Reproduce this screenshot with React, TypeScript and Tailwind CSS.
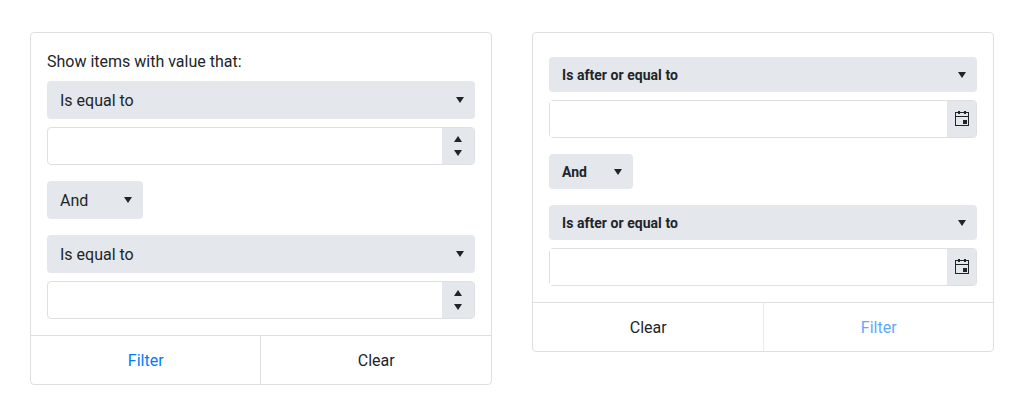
import React from 'react';

function Caret({ up = false }: { up?: boolean }) {
  return (
    <svg className="block h-[6px] w-2 shrink-0" viewBox="0 0 8 6" fill="#212529" aria-hidden="true">
      <path d={up ? 'M0 6L4 0L8 6Z' : 'M0 0L4 6L8 0Z'} />
    </svg>
  );
}

function CalendarIcon() {
  return (
    <svg className="block h-4 w-4 shrink-0" viewBox="0 0 16 16" fill="#212529" shapeRendering="crispEdges" aria-hidden="true">
      <path d="M1 1h3V0h2v1h4V0h2v1h3v14H1V1zm1 1v3h12V2h-2v1h-2V2H6v1H4V2H2zm0 4v8h12V6H2z" fillRule="evenodd" />
      <path d="M9 9h4v4H9z" />
    </svg>
  );
}

function Dropdown({ label, compact = false, small = false }: { label: string; compact?: boolean; small?: boolean }) {
  const size = compact ? 'h-[35px] text-sm font-bold tracking-[0.04px]' : 'h-[38px] text-base';
  const width = small ? (compact ? 'w-[84px]' : 'w-24') : 'w-full';
  return (
    <button type="button" className={`flex shrink-0 items-center justify-between rounded-[4px] bg-[#e4e7eb] pr-[11px] pl-[13px] text-left ${size} ${width}`}>
      <span className={compact ? '' : 'pt-0.5'}>{label}</span>
      <Caret />
    </button>
  );
}

function NumberInput() {
  return (
    <div className="mt-2 flex h-[38px] overflow-hidden rounded-[4px] border border-[#dedfe0]">
      <input type="text" className="min-w-0 flex-1 outline-none" />
      <div className="flex w-8 flex-col items-center justify-center gap-2 bg-[#e4e7eb]">
        <Caret up />
        <Caret />
      </div>
    </div>
  );
}

function DateInput() {
  return (
    <div className="mt-2 flex h-[38px] rounded-[4px] border border-[#dedfe0]">
      <input type="text" className="min-w-0 flex-1 bg-white outline-none" />
      <button type="button" className="flex w-[29px] items-center justify-start rounded-r-[3px] bg-[#e4e7eb] pl-[7px]">
        <CalendarIcon />
      </button>
    </div>
  );
}

export default function App() {
  return (
    <main className="flex min-h-[415px] items-start gap-10 bg-white px-[30px] pt-8 font-['Roboto',sans-serif] text-base leading-6 text-[#212529]">
      <form className="w-[462px] rounded-[4px] border border-[#dedfe0]">
        <div className="p-4">
          <div className="mb-[7px] pt-px">Show items with value that:</div>
          <Dropdown label="Is equal to" />
          <NumberInput />
          <div className="my-4">
            <Dropdown label="And" small />
          </div>
          <Dropdown label="Is equal to" />
          <NumberInput />
        </div>
        <div className="grid h-[49px] grid-cols-2 border-t border-[#dedfe0]">
          <button type="button" className="border-r border-[#dedfe0] pt-px pl-[0.5px] text-[#007bff]">Filter</button>
          <button type="button" className="pt-px pl-[0.5px]">Clear</button>
        </div>
      </form>
      <form className="w-[462px] rounded-[4px] border border-[#dedfe0]">
        <div className="px-4 pt-6 pb-4">
          <Dropdown label="Is after or equal to" compact />
          <DateInput />
          <div className="my-4">
            <Dropdown label="And" compact small />
          </div>
          <Dropdown label="Is after or equal to" compact />
          <DateInput />
        </div>
        <div className="grid h-[49px] grid-cols-2 border-t border-[#dedfe0]">
          <button type="button" className="pt-px pl-[0.5px]">Clear</button>
          <button type="button" className="border-l border-[#dedfe0] pt-px pl-[0.5px] text-[#007bff] opacity-65">Filter</button>
        </div>
      </form>
    </main>
  );
}
